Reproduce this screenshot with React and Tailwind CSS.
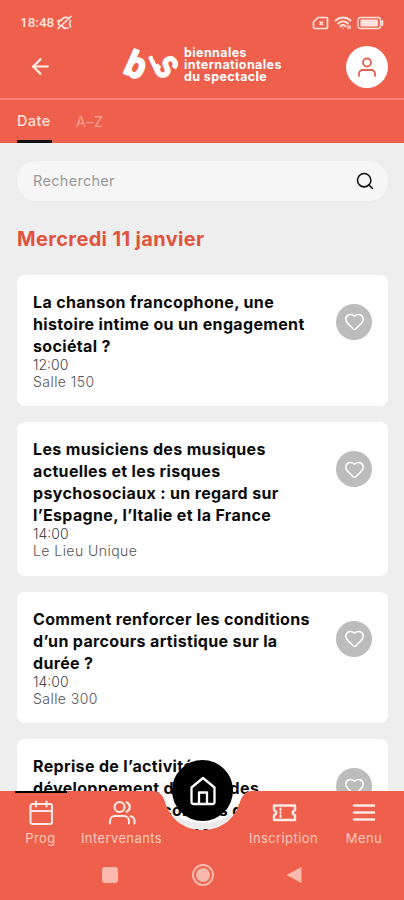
import { Heart, Search, ArrowLeft } from "lucide-react";

const EVENTS = [
  {
    lines: ["La chanson francophone, une", "histoire intime ou un engagement", "sociétal ?"],
    time: "12:00",
    room: "Salle 150",
  },
  {
    lines: ["Les musiciens des musiques", "actuelles et les risques", "psychosociaux : un regard sur", "l’Espagne, l’Italie et la France"],
    time: "14:00",
    room: "Le Lieu Unique",
  },
  {
    lines: ["Comment renforcer les conditions", "d’un parcours artistique sur la", "durée ?"],
    time: "14:00",
    room: "Salle 300",
  },
  {
    lines: ["Reprise de l’activité,", "développement durable des", "aux artistes : accordées de", "nouveaux programmes locaux"],
    time: "14:30",
    room: "Salle 200",
  },
];

function StatusBar() {
  return (
    <div className="flex h-[46px] items-center justify-between pl-5 pr-5 text-[#fde3dd]">
      <div className="flex items-center">
        <span className="font-[Roboto] text-[13.500px] font-medium leading-none">18:48</span>
        <svg width="18" height="16" viewBox="0 0 18 16" className="ml-[2px]" fill="none" stroke="currentColor" strokeWidth="1.7" strokeLinecap="round">
          <path d="M4 10.500C2.500 10 2 8.500 3 7M5 5.500C7 2 10.500 1.500 13 3.500M14.500 5.500 13.500 8.500l1 3.500M5.500 10.500 9 13.500M2 13.500 15 1.500M8 13.500l4-.5M1.500 6l3-1" />
        </svg>
      </div>
      <div className="flex items-center gap-[5px]">
        <svg width="17" height="14" viewBox="0 0 17 14" fill="none" stroke="currentColor" strokeWidth="1.7" strokeLinejoin="round">
          <path d="M6 1.500h8a1.500 1.500 0 0 1 1.500 1.500v8a1.500 1.500 0 0 1-1.500 1.500H3A1.500 1.500 0 0 1 1.500 11V6Z" />
          <path d="m7.500 5.500 3.500 3.500m0-3.500L7.500 9" />
        </svg>
        <svg width="18" height="14" viewBox="0 0 18 14" fill="none" stroke="currentColor" strokeWidth="2" strokeLinecap="round">
          <path d="M1.500 4.500c4.500-4 10.500-4 15 0M4 7.500c3-2.700 7-2.700 10 0M6.500 10.200c1.500-1.400 3.500-1.400 5 0" />
          <path d="M9 12.300h.1M14 10v2.500M16 10v2.500" strokeWidth="1.400" />
        </svg>
        <svg width="27" height="14" viewBox="0 0 27 14" fill="none" stroke="currentColor" strokeWidth="1.3">
          <rect x="1" y="1.500" width="22.500" height="11" rx="2.500" />
          <rect x="3.500" y="3.500" width="17.500" height="7" rx="1" fill="currentColor" stroke="none" />
          <path d="M25.300 5v4" strokeWidth="2" strokeLinecap="round" />
        </svg>
      </div>
    </div>
  );
}

function Logo() {
  return (
    <div className="flex items-start text-white">
      <svg
        width="60"
        height="38"
        viewBox="0 0 60 38"
        fill="currentColor"
        stroke="currentColor"
        strokeLinejoin="round"
        textAnchor="middle"
        overflow="visible"
        className="font-[Inter] font-bold"
      >
        <g transform="translate(12.500 18.500) rotate(24) scale(.88 1)">
          <text y="13" fontSize="36" strokeWidth="2">b</text>
        </g>
        <g transform="translate(29 17) rotate(-25)">
          <text y="6.500" fontSize="17" strokeWidth="1.800">i</text>
        </g>
        <g transform="translate(42.500 20.500) rotate(52) scale(.76 1)">
          <text y="12" fontSize="43" strokeWidth=".6">s</text>
        </g>
      </svg>
      <p className="mt-[1px] whitespace-nowrap font-[Inter] text-[12.500px] font-bold leading-[12px] tracking-[0.4px]">
        biennales
        <br />
        internationales
        <br />
        du spectacle
      </p>
    </div>
  );
}

function Header() {
  return (
    <header className="h-[143px] bg-[#ee604b]">
      <StatusBar />
      <div className="flex h-[52px] items-start pl-[28px] pr-4">
        <ArrowLeft size={25} strokeWidth={2.1} className="mt-[8px] text-[#fff1ee]" />
        <div className="ml-[71px] flex-1">
          <Logo />
        </div>
        <span className="grid size-[42px] place-items-center rounded-full bg-white">
          <svg width="20" height="22" viewBox="0 0 20 22" fill="none" stroke="#df6450" strokeWidth="1.8" strokeLinecap="round">
            <circle cx="10" cy="6.500" r="4" />
            <path d="M2 20v-2.500A3.500 3.500 0 0 1 5.500 14h9a3.500 3.500 0 0 1 3.500 3.500V20" />
          </svg>
        </span>
      </div>
      <nav className="flex h-[45px] border-t-2 border-[#f4806f] px-[17px] text-[14px]">
        <span className="flex w-[35px] items-center border-b-[3px] border-[#111] pt-[2px] text-[14.500px] font-medium tracking-[0.4px] text-[#ffe1da]">Date</span>
        <span className="ml-6 flex items-center pb-[1px] tracking-[0.7px] text-[#f7a496]">A–Z</span>
      </nav>
    </header>
  );
}

function EventCard({ event }) {
  return (
    <article className="flex shrink-0 items-start justify-between rounded-lg bg-white pb-[16.500px] pl-4 pr-4 pt-4">
      <div>
        <h3 className="whitespace-nowrap text-[16px] font-bold leading-[22px] tracking-[0.34px] text-[#0b0b0b]">
          {event.lines.map((line) => (
            <span key={line} className="block">{line}</span>
          ))}
        </h3>
        <p className="text-[14px] font-light leading-[16px] text-[#444]">{event.time}</p>
        <p className="text-[14px] font-light leading-[17px] tracking-[0.45px] text-[#555]">{event.room}</p>
      </div>
      <span className="mt-[13px] grid size-9 shrink-0 place-items-center rounded-full bg-[#bcbcbc]">
        <Heart size={21} strokeWidth={1.7} className="text-white" />
      </span>
    </article>
  );
}

function NavItem({ label, className, children }) {
  return (
    <div className={`flex flex-col items-center gap-[3px] pt-[9px] ${className}`}>
      <svg width="28" height="26" viewBox="0 0 28 26" fill="none" stroke="#ffe9e4" strokeWidth="2.100" strokeLinejoin="round" strokeLinecap="round">
        {children}
      </svg>
      <span className="whitespace-nowrap text-[13px] leading-[19px] tracking-[0.4px] text-[#fcc9be]">{label}</span>
    </div>
  );
}

function BottomBar() {
  return (
    <footer className="absolute inset-x-0 bottom-0 h-[109px]">
      {/* bar background, the middle piece leaves a hole round the home button */}
      <div className="absolute inset-0 flex flex-col">
        <div className="flex h-[44px]">
          <div className="flex-1 bg-[#ee604b]" />
          <svg width="108" height="44" viewBox="0 0 108 44" fill="#ee604b">
            <path d="M0 0h5c6 0 10 4 12 11C22 28 36 39 54.500 39S87 28 92 11C94 4 98 0 104 0h4v44H0Z" />
            <path d="M18.500 13C24 29 37 38 54.500 38S85 29 90.500 13C83 26 70 32 54.500 32S26 26 18.500 13Z" fill="#000" fillOpacity=".08" />
          </svg>
          <div className="flex-1 bg-[#ee604b]" />
        </div>
        <div className="flex-1 bg-[#ee604b]" />
      </div>
      <span className="absolute left-[15px] top-0 h-[2px] w-[52px] bg-black" />

      <div className="relative flex h-[60px]">
        <NavItem label="Prog" className="w-[81px]">
          <rect x="3.500" y="4" width="21.500" height="20" rx="2" />
          <path d="M3.500 11H25M9 1.500v5M19.500 1.500v5" />
        </NavItem>
        <NavItem label="Intervenants" className="w-[81px]">
          <circle cx="11.500" cy="7" r="5" />
          <path d="M2 23.500V21a5 5 0 0 1 5-5h9a5 5 0 0 1 5 5v2.500M18.500 2.300a5 5 0 0 1 0 9.400M22.500 16.200c2.500.6 4 2.300 4 4.800v2.500" />
        </NavItem>
        <div className="w-[81px]" />
        <NavItem label="Inscription" className="w-[81px]">
          <path d="M4 5.500h21v5c-3 .5-3 4 0 4.500V20H4v-5c3-.5 3-4 0-4.500Z" strokeWidth="2.400" />
          <path d="M10.500 8.500v1.500M10.500 12.500v.5M10.500 15.500v1.500" />
        </NavItem>
        <NavItem label="Menu" className="w-[80px]">
          <path d="M4 5.500h20M4 12.500h20M4 19.500h20" strokeWidth="2.500" />
        </NavItem>
      </div>

      <span className="absolute left-[172px] top-[-31px] grid size-[61px] place-items-center rounded-full bg-black">
        <svg width="28" height="32" viewBox="0 0 28 32" fill="none" stroke="white" strokeWidth="2.300" strokeLinejoin="round">
          <path d="M2.500 12.500 14 3l11.500 9.500V27a2 2 0 0 1-2 2h-19a2 2 0 0 1-2-2Z" />
          <path d="M10 29V17.500h8V29" />
        </svg>
      </span>

      <div className="relative flex h-[49px] items-center justify-between pb-[1px] pl-[102px] pr-[102px]">
        <span className="size-4 rounded-[3px] bg-[#fbb9ae]" />
        <span className="ml-[1px] grid size-[22px] place-items-center rounded-full border-2 border-[#fbb9ae]">
          <span className="size-[14px] rounded-full bg-[#fbb9ae]" />
        </span>
        <svg width="16" height="18" viewBox="0 0 16 18" fill="#fbb9ae">
          <path d="M15.500 1v16L.5 9Z" />
        </svg>
      </div>
    </footer>
  );
}

export default function App() {
  return (
    <div className="relative h-[900px] w-[404px] overflow-hidden bg-[#eeeeee] font-[Inter,sans-serif]">
      <Header />
      <main className="flex h-[757px] flex-col overflow-hidden px-4 pl-[17px] pt-[18px]">
        <div className="flex h-10 shrink-0 items-center justify-between rounded-full bg-[#f6f6f6] pl-4 pr-[13px]">
          <span className="text-[14.500px] tracking-[0.3px] text-[#999]">Rechercher</span>
          <Search size={20} strokeWidth={1.900} className="text-[#111]" />
        </div>
        <h2 className="mt-[25px] h-[48.500px] shrink-0 text-[20px] font-bold leading-[27px] tracking-[0.35px] text-[#e2533e]">
          Mercredi 11 janvier
        </h2>
        <div className="flex flex-col gap-4">
          {EVENTS.map((event) => (
            <EventCard key={event.lines[0]} event={event} />
          ))}
        </div>
      </main>
      <BottomBar />
    </div>
  );
}
